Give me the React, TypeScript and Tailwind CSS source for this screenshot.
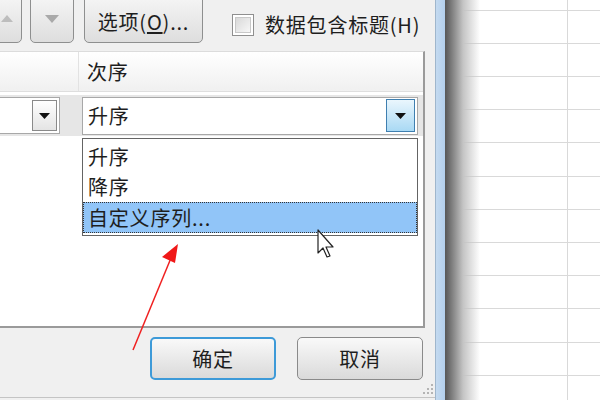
const cjk = { fontFamily: '"Noto Sans CJK SC", "Liberation Sans", sans-serif' };

const sheetRows = [11, 33, 33, 33, 33, 34, 33, 33, 33, 33, 34, 33, 33];

const Caret = () => (
  <svg width="11" height="6" viewBox="0 0 11 6">
    <path d="M0 0 H11 L5.5 6 Z" fill="#111" />
  </svg>
);

const App = () => {
  return (
    <div className="relative flex h-[400px] w-[600px] overflow-hidden bg-white text-[20px] tracking-[0.8px] text-[#1e1e1e]" style={cjk}>
      {/* dialog */}
      <div className="flex h-full w-[445px] shrink-0">
        <div className="flex w-[435px] flex-col bg-[#f0f0f0]">
          {/* toolbar */}
          <div className="flex h-[51px] shrink-0 items-start gap-[8px]">
            <div className="ml-[-22px] mt-[-6px] flex h-[49px] w-[44px] items-center justify-center rounded-[5px] border border-[#8e8f8f] bg-gradient-to-b from-[#f6f6f6] to-[#dedede]">
              <svg width="12" height="7" viewBox="0 0 12 7" className="ml-[14px]">
                <path d="M0 7 L6 0 L12 7 Z" fill="#bdbdbd" />
              </svg>
            </div>
            <div className="mt-[-6px] flex h-[49px] w-[44px] items-center justify-center rounded-[5px] border border-[#8e8f8f] bg-gradient-to-b from-[#f6f6f6] to-[#dedede]">
              <svg width="14" height="8" viewBox="0 0 14 8">
                <path d="M0 0 H14 L7 8 Z" fill="#a9a9a9" />
              </svg>
            </div>
            <div className="ml-[2px] mt-[-6px] flex h-[49px] w-[119px] items-center justify-center rounded-[5px] border border-[#8e8f8f] bg-gradient-to-b from-[#f6f6f6] to-[#dedede] pt-[6px]">
              选项(<span className="underline underline-offset-2">O</span>)...
            </div>
            <div className="ml-[21px] mt-[10px] flex items-center gap-[11px]">
              <div className="flex h-[22px] w-[22px] items-center justify-center border border-[#8f8f8f] bg-white">
                <div className="h-[16px] w-[16px] border border-[#c8c8c8] bg-gradient-to-br from-[#d9d9d9] to-[#f7f7f7]" />
              </div>
              <span>数据包含标题(H)</span>
            </div>
          </div>

          {/* sort list */}
          <div className="relative h-[277px] w-[425px] shrink-0 border-r-[2px] border-b-[2px] border-t border-[#9a9a9a] border-t-[#dcdcdc] bg-white">
            <div className="flex h-[40px] border-b border-[#dedede] bg-gradient-to-b from-white to-[#f0f0f0]">
              <div className="w-[79px] border-r border-[#e2e2e2]" />
              <div className="flex items-center pl-[8px]">次序</div>
            </div>
            <div className="mt-[3px] flex h-[41px] items-center bg-[#e6e6e6]">
              <div className="flex h-[37px] w-[60px] items-center justify-end border border-l-0 border-[#a8a8a8] bg-white pr-[2px]">
                <div className="flex h-[31px] w-[25px] items-center justify-center border border-[#8a8a8a] bg-gradient-to-b from-white to-[#e4e4e4]">
                  <Caret />
                </div>
              </div>
              <div className="ml-[22px] flex h-[38px] w-[336px] items-center justify-between border border-[#a8a8a8] bg-white pl-[5px] pr-[2px]">
                <span>升序</span>
                <div className="flex h-[33px] w-[29px] items-center justify-center border border-[#3f7fb0] bg-gradient-to-b from-[#eaf6fd] to-[#a9d9f4]">
                  <Caret />
                </div>
              </div>
            </div>

            {/* open dropdown */}
            <div className="absolute left-[82px] top-[86px] flex h-[98px] w-[336px] flex-col border border-[#646464] bg-white">
              <div className="flex h-[33px] items-end pl-[5px]">升序</div>
              <div className="flex h-[30px] items-center pl-[5px]">降序</div>
              <div className="flex h-[31px] items-center border border-dotted border-[#333] bg-[#91c5f8] pl-[4px]">自定义序列...</div>
            </div>
          </div>

          {/* footer */}
          <div className="relative flex flex-1 items-start justify-end gap-[21px] pr-[12px] pt-[9px]">
            <div className="flex h-[43px] w-[126px] items-center justify-center rounded-[5px] border-[2px] border-[#3d9ad8] bg-gradient-to-b from-[#f9f9f9] to-[#dadada]">
              确定
            </div>
            <div className="flex h-[43px] w-[126px] items-center justify-center rounded-[5px] border border-[#8a8a8a] bg-gradient-to-b from-[#f9f9f9] to-[#dadada]">
              取消
            </div>
            <svg className="absolute bottom-[6px] right-[2px]" width="10" height="12" viewBox="0 0 10 12">
              {[
                [8, 2], [8, 6], [4, 6], [8, 10], [4, 10], [0, 10],
              ].map(([x, y]) => (
                <rect key={`${x}-${y}`} x={x} y={y} width="2" height="2" fill="#b4b4b4" />
              ))}
            </svg>
            <div className="absolute bottom-[2px] left-0 right-0 h-px bg-[#c4c4c4]" />
          </div>
        </div>
        <div className="w-[10px] border-l border-[#9fb6cc] bg-gradient-to-r from-[#c4daf0] to-[#b3cfec]" />
      </div>

      {/* spreadsheet behind */}
      <div className="relative flex-1 border-l border-[#5a5a5a]">
        {sheetRows.map((h, i) => (
          <div key={i} className="flex border-b border-[#d9d9d9]" style={{ height: h }}>
            <div className="w-[122px] border-r border-[#d9d9d9]" />
          </div>
        ))}
        <div className="absolute inset-y-0 left-0 w-[34px] bg-gradient-to-r from-[#5c5c5c] via-[#c4c4c4] to-transparent" />
      </div>

      {/* red annotation arrow */}
      <svg className="pointer-events-none absolute left-0 top-0" width="600" height="400">
        <line x1="133" y1="350" x2="171" y2="258" stroke="#f02020" strokeWidth="1.5" />
        <path d="M178 244 L162 257 L175 263 Z" fill="#f01818" />
      </svg>

      {/* mouse pointer */}
      <svg className="pointer-events-none absolute left-[317px] top-[229px]" width="20" height="32" viewBox="0 0 20 32">
        <path d="M1 1 L1 24 L6 19 L10 28 L13 27 L9 18 L16 18 Z" fill="#fff" stroke="#222" strokeWidth="1.2" strokeLinejoin="round" />
      </svg>
    </div>
  );
};

export default App;
